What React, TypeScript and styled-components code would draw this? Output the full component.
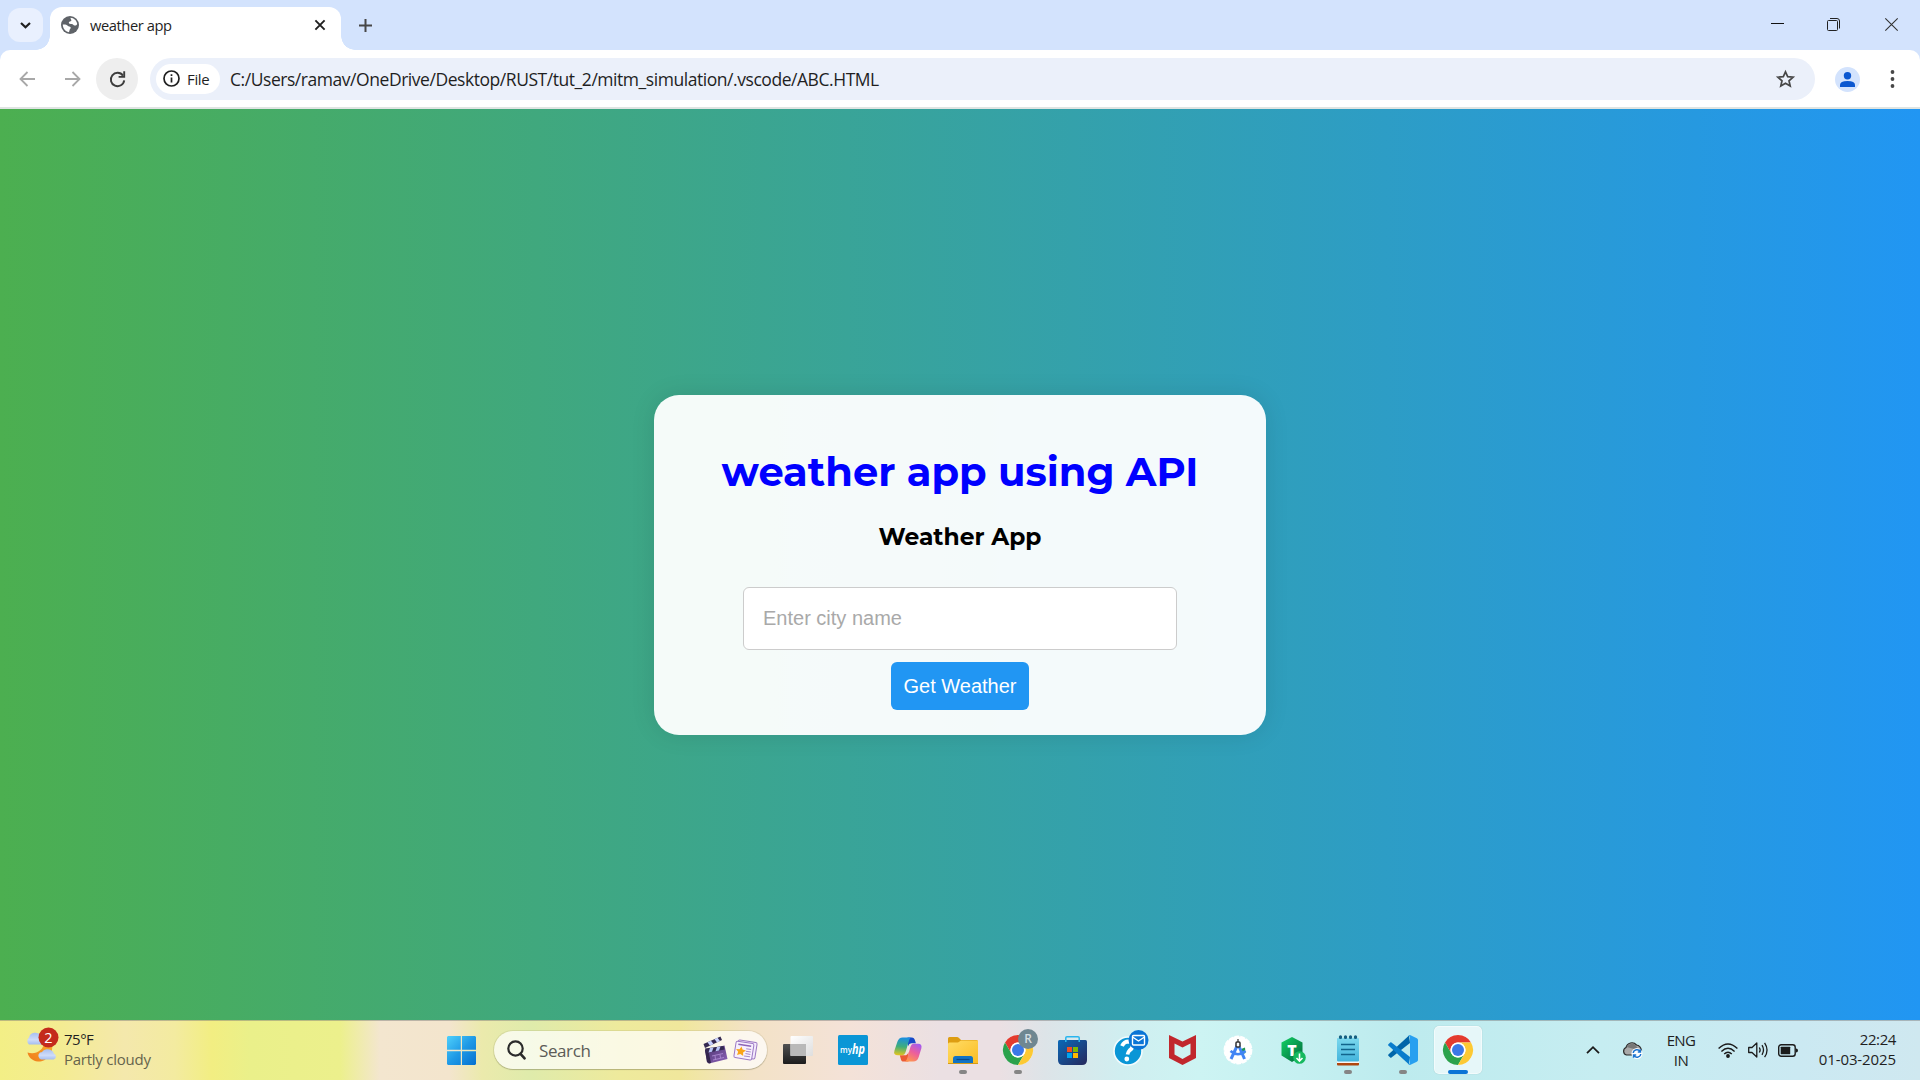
import React from "react";
import styled, { createGlobalStyle } from "styled-components";

const ui = `"Segoe UI", "Open Sans", "Noto Sans", sans-serif`;

const GlobalStyle = createGlobalStyle`
  *, *::before, *::after { box-sizing: border-box; }
  html, body { margin: 0; padding: 0; overflow: hidden; }
  body { font-family: ${ui}; color: #1f1f1f; }
  svg { display: block; flex: none; overflow: visible; }
`;

const Screen = styled.div`
  display: flex;
  flex-direction: column;
  width: 1920px;
  height: 1080px;
  overflow: hidden;
`;

/* ---------- browser chrome ---------- */

const TabStrip = styled.header`
  display: flex;
  align-items: flex-start;
  height: 50px;
  padding: 0 22px 0 8px;
  background: #d3e3fd;
`;

const TabSearch = styled.button`
  display: grid;
  place-items: center;
  width: 35px;
  height: 34px;
  margin: 8px 7px 0 0;
  padding: 0;
  border: 0;
  border-radius: 12px;
  background: #e9f0fe;
`;

const Tab = styled.div`
  position: relative;
  display: flex;
  align-items: center;
  width: 291px;
  height: 43px;
  margin-top: 7px;
  padding: 0 16px 7px 11px;
  border-radius: 12px 12px 0 0;
  background: #fff;

  &::before,
  &::after {
    content: "";
    position: absolute;
    bottom: 0;
    width: 14px;
    height: 14px;
  }
  &::before {
    right: 100%;
    background: radial-gradient(circle at 0 0, transparent 13.5px, #fff 14px);
  }
  &::after {
    left: 100%;
    background: radial-gradient(circle at 100% 0, transparent 13.5px, #fff 14px);
  }
`;

const TabTitle = styled.span`
  flex: 1;
  padding-left: 11px;
  font-size: 14.7px;
  line-height: 20px;
  letter-spacing: -0.42px;
`;

const NewTab = styled.button`
  margin: 19px 0 0 18px;
  padding: 0;
  border: 0;
  background: none;
`;

const WindowControls = styled.div`
  display: grid;
  grid-template-columns: 56px 58px 13px;
  margin: 18px 0 0 auto;
`;

const ToolbarBack = styled.div`
  background: #d3e3fd;
`;

const Toolbar = styled.div`
  display: flex;
  align-items: center;
  height: 59px;
  padding: 0 20px 1px 19px;
  border-radius: 10px 10px 0 0;
  background: linear-gradient(#fff 57px, #dfe4e2 57px);
`;

const NavIcon = styled.span<{ $gap: number }>`
  margin-right: ${(p) => p.$gap}px;
`;

const Reload = styled.button`
  display: grid;
  place-items: center;
  width: 42px;
  height: 42px;
  margin-right: 12px;
  padding: 0;
  border: 0;
  border-radius: 50%;
  background: #eeeeee;
`;

const Omnibox = styled.div`
  display: flex;
  align-items: center;
  width: 1665px;
  height: 42px;
  padding: 0 20px 0 6px;
  border-radius: 21px;
  background: #ebf0fa;
`;

const FileChip = styled.div`
  display: flex;
  align-items: center;
  gap: 7px;
  width: 64px;
  height: 30px;
  padding: 0 0 1px 7px;
  border-radius: 15px;
  background: #fff;
  font-size: 15px;
  font-weight: 500;
  line-height: 20px;
  letter-spacing: -0.35px;
`;

const Url = styled.span`
  flex: 1;
  padding: 0 0 0 10px;
  font-size: 17.5px;
  line-height: 24px;
  letter-spacing: -0.45px;
  white-space: nowrap;
`;

const Profile = styled.div`
  display: grid;
  place-items: center;
  width: 25px;
  height: 25px;
  margin: 0 30px 0 20px;
  border-radius: 50%;
  background: #d3e3fd;
`;

/* ---------- web page ---------- */

const Page = styled.main`
  display: flex;
  align-items: center;
  justify-content: center;
  height: 911px;
  padding-top: 1px;
  background: linear-gradient(to right, #4caf50, #2196f3);
`;

const Card = styled.section`
  display: flex;
  flex-direction: column;
  align-items: center;
  width: 612px;
  height: 340px;
  border-radius: 25px;
  background: rgba(255, 255, 255, 0.95);
  box-shadow: 0 0 25px rgba(0, 0, 0, 0.1);
`;

const Title = styled.h1`
  margin: 52px 0 0;
  color: #0000ff;
  font: 700 40px/50px Montserrat, Inter, sans-serif;
  white-space: nowrap;
`;

const Subtitle = styled.h3`
  margin: 25px 0 0;
  color: #000;
  font: 700 23.4px/30px Montserrat, Inter, sans-serif;
  white-space: nowrap;
`;

const CityInput = styled.input`
  width: 434px;
  height: 63px;
  margin: 35px 0 12px;
  padding: 0 19px;
  border: 1px solid #ccc;
  border-radius: 6px;
  outline: 0;
  background: #fff;
  font: 20px "Liberation Sans", Arial, sans-serif;
  &::placeholder {
    color: #a9a9a9;
    opacity: 1;
  }
`;

const GetButton = styled.button`
  width: 138px;
  height: 48px;
  padding: 0;
  border: 0;
  border-radius: 6px;
  background: #2196f3;
  color: #fff;
  font: 20px "Liberation Sans", Arial, sans-serif;
`;

/* ---------- taskbar ---------- */

const Taskbar = styled.footer`
  display: flex;
  align-items: center;
  height: 60px;
  box-shadow: inset 0 1px rgba(120, 120, 120, 0.45);
  background: linear-gradient(
    to right,
    #f3ef86 0,
    #f4ec92 60px,
    #f4e8ac 125px,
    #f3eba0 175px,
    #f2ee82 212px,
    #eaf08a 250px,
    #ecf08c 340px,
    #f3e6cf 380px,
    #f3e5cd 450px,
    #ebeaac 482px,
    #dfebab 530px,
    #eeea9c 620px,
    #f0e79c 680px,
    #f3e2c6 750px,
    #f4e2d8 850px,
    #ebe0e3 940px,
    #ebe0e3 1000px,
    #dde4e8 1045px,
    #d0eef0 1120px,
    #cdf4f3 1200px,
    #c5f0f1 1300px,
    #bdebee 1400px,
    #c6edf1 1600px,
    #cbe9f2 1800px,
    #cfe8f0 1920px
  );
`;

const Weather = styled.div`
  display: flex;
  align-items: flex-start;
  gap: 5px;
  width: 434px;
  height: 60px;
  padding: 7px 0 0 24px;
`;

const WeatherText = styled.div`
  padding-top: 2px;
  font-size: 15px;
  line-height: 20px;
  letter-spacing: -0.5px;
`;

const Condition = styled.div`
  color: #66644c;
  letter-spacing: -0.25px;
`;

const AppCell = styled.div`
  position: relative;
  display: grid;
  place-items: center;
  width: 55px;
  height: 60px;
`;

const ActiveTile = styled.div`
  display: grid;
  place-items: center;
  width: 48px;
  height: 48px;
  border: 1px solid rgba(255, 255, 255, 0.5);
  border-radius: 5px;
  background: rgba(255, 255, 255, 0.6);
  box-shadow: 0 0 1px rgba(0, 0, 0, 0.25);
`;

const Running = styled.span<{ $active?: boolean }>`
  position: absolute;
  left: 50%;
  bottom: 6px;
  width: ${(p) => (p.$active ? 20 : 8)}px;
  height: 4px;
  border-radius: 2px;
  background: ${(p) => (p.$active ? "#0a74d6" : "#858585")};
  transform: translateX(-50%);
`;

const SearchBox = styled.div`
  display: flex;
  align-items: center;
  width: 273px;
  height: 38px;
  margin: 0 3px 0 5px;
  padding: 0 10px 0 13px;
  border-radius: 19px;
  background: rgba(255, 255, 255, 0.72);
  box-shadow: 0 0 0 1px rgba(120, 120, 80, 0.14), 0 1px 1px rgba(90, 90, 60, 0.3);
`;

const SearchLabel = styled.span`
  flex: 1;
  padding: 1px 0 0 13px;
  color: #5c5c57;
  font-size: 17px;
  line-height: 24px;
  letter-spacing: -0.4px;
`;

const SearchArt = styled.span`
  display: flex;
  align-items: center;
  gap: 6px;
`;

const Tray = styled.div`
  display: flex;
  align-items: center;
  flex: 1;
  height: 60px;
  padding: 0 24px 0 101px;
  font-size: 15px;
  line-height: 20px;
`;

const Language = styled.div`
  width: 60px;
  margin: 0 7px 0 7px;
  text-align: center;
  letter-spacing: -0.6px;
`;

const Status = styled.div`
  display: flex;
  align-items: center;
  gap: 10px;
`;

const Clock = styled.div`
  flex: 1;
  margin-top: -2px;
  text-align: right;
  white-space: nowrap;
  letter-spacing: -0.1px;
`;

const Time = styled.div`
  letter-spacing: -0.4px;
`;

/* ---------- drawings ---------- */

const ChromeLogo = () => (
  <svg width="30" height="30" viewBox="0 0 48 48">
    <circle cx="24" cy="24" r="24" fill="#fff" />
    <path d="M3.2 12A24 24 0 0 1 44.8 12H24A12 12 0 0 0 13.6 30Z" fill="#e33b2e" />
    <path d="M3.2 12A24 24 0 0 0 24 48L34.4 30A12 12 0 0 1 13.6 30Z" fill="#2ba24c" />
    <path d="M44.8 12A24 24 0 0 1 24 48L34.4 30A12 12 0 0 0 24 12Z" fill="#fcc934" />
    <circle cx="24" cy="24" r="12" fill="#fff" />
    <circle cx="24" cy="24" r="9.6" fill="#3b78e7" />
  </svg>
);

const Globe = () => (
  <svg width="18" height="18" viewBox="0 0 18 18">
    <circle cx="9" cy="9" r="9" fill="#5f6368" />
    <path d="M9.500 1.700C13 1.900 15.800 4.600 16.200 8C15.500 9.600 14 10 12.800 9.200C12 8.500 11.500 8 9.800 8C8.200 8 7.600 7.300 7.900 6.300C8.300 5.200 9.600 5.600 10.300 4.800C10.900 4 9.400 3.200 9.500 1.700Z" fill="#fff" />
    <path d="M1.800 8.500C3.500 8.200 5.800 8.600 6.700 9.700C7.400 10.700 9 10.200 9.600 11.200C10.200 12.300 9 12.900 8.600 13.800C8.400 14.600 8.600 15.500 7.800 16.200C4.300 15.500 1.800 12.500 1.800 8.500Z" fill="#fff" />
  </svg>
);

const WeatherIcon = () => (
  <svg width="35" height="36" viewBox="0 0 35 36">
    <defs>
      <linearGradient id="cl" x1="0" y1="0" x2="0" y2="1">
        <stop offset="0" stopColor="#a8bff0" />
        <stop offset=".6" stopColor="#cfdcf8" />
        <stop offset="1" stopColor="#a4bdf0" />
      </linearGradient>
      <linearGradient id="mn" x1="0" y1="1" x2="1" y2="0">
        <stop offset="0" stopColor="#ef7a1c" />
        <stop offset="1" stopColor="#fbb02c" />
      </linearGradient>
    </defs>
    <path d="M28 16C30 27 22 35 14 34.500C8 34 4.500 30 3.500 25.500C11 27.500 19 25 21 14Z" fill="url(#mn)" />
    <path d="M5 17.500a4.500 4.500 0 0 1 0-7a6.500 5.800 0 0 1 12-2q4 1 4 5t-4 4z" fill="url(#cl)" />
    <path d="M17 32.500a4 4 0 0 1-1-7q2-.5 2-.5a6 5 0 0 1 9.500-1.500q2 1 2.300 3a3.300 3.200 0 0 1 0 6z" fill="url(#cl)" />
    <circle cx="24.500" cy="10.500" r="10" fill="#c42b1c" />
    <text x="24.500" y="15.800" textAnchor="middle" fontFamily="Open Sans, sans-serif" fontSize="14.500" fill="#fff">2</text>
  </svg>
);

const WindowsLogo = () => (
  <svg width="29" height="29" viewBox="0 0 29 29">
    <defs>
      <linearGradient id="wn" gradientUnits="userSpaceOnUse" x1="0" y1="0" x2="29" y2="29">
        <stop offset="0" stopColor="#4fd0fb" />
        <stop offset=".5" stopColor="#1f9ae6" />
        <stop offset="1" stopColor="#0470d0" />
      </linearGradient>
    </defs>
    <path d="M1 0H13.800V13.800H0V1ZM15 0H28L29 1V13.800H15ZM0 15.200H13.800V29H1L0 28ZM15 15.200H29V28L28 29H15Z" fill="url(#wn)" />
  </svg>
);

const SearchGlyph = () => (
  <svg width="19" height="20" viewBox="0 0 19 20" fill="none" stroke="#2b2b2b" strokeWidth="2.200">
    <circle cx="8.500" cy="8.500" r="7.200" />
    <path d="M13.500 13.800L17.600 18.300" strokeWidth="2.600" strokeLinecap="round" />
  </svg>
);

const Clapper = () => (
  <svg width="25" height="28" viewBox="0 0 25 28">
    <defs>
      <linearGradient id="cp" x1="0" y1="0" x2="1" y2="1">
        <stop offset="0" stopColor="#49346d" />
        <stop offset="1" stopColor="#8f62ba" />
      </linearGradient>
    </defs>
    <path d="M2 14L21.500 9.500L24.500 23L6 27.500L4 26Z" fill="url(#cp)" />
    <path d="M2 14L5 13.200L8 27L6 27.500L4 26Z" fill="#33254d" />
    <path d="M.5 8L17.500 .5L19 4L2 12Z" fill="#352a52" />
    <path d="M4.500 6.300L8 4.700L10.500 8L7 9.700ZM11.500 3.100L14.500 1.800L17 5L14 6.400Z" fill="#c9d3ff" />
    <path d="M2 12.500L20.500 10L21.500 13.500L3 17Z" fill="#352a52" />
    <path d="M7 12L10.500 11.400L9 15.800L5.500 16.500ZM14 11L17.500 10.500L16 14.500L12.500 15.200Z" fill="#b8c5f8" />
    <path d="M9 20L20 17.500M10 24L21 21.500M12 19.500L12.500 23.500M17 18.500L17.500 22" stroke="#b391d8" strokeWidth=".8" fill="none" />
  </svg>
);

const News = () => (
  <svg width="23" height="21" viewBox="0 0 23 21">
    <g transform="rotate(9 11 10)">
      <rect x="3" y="1" width="19" height="16.500" rx="1.500" fill="#f4eafc" stroke="#9c79c4" strokeWidth="1" />
      <rect x="1" y="2.500" width="18" height="16.500" rx="1.500" fill="#f7f0fd" stroke="#9c79c4" strokeWidth="1" />
      <path d="M3.500 5.300H16.500" stroke="#8d64b8" strokeWidth="1.500" />
      <path d="M12 8.500H17M12 11H17M12 13.500H17M11 16H17" stroke="#a98bca" strokeWidth="1" />
      <path d="M7 7L8.500 10L12 10.400L9.500 12.800L10.200 16.200L7 14.600L3.900 16.200L4.500 12.800L2 10.400L5.500 10Z" fill="#f9a51a" />
    </g>
  </svg>
);

const TaskView = () => (
  <svg width="30" height="28" viewBox="0 0 30 28">
    <defs>
      <linearGradient id="tv" x1="0" y1="0" x2="0" y2="1">
        <stop offset="0" stopColor="#515151" />
        <stop offset="1" stopColor="#1c1c1c" />
      </linearGradient>
      <linearGradient id="tw" x1="0" y1="0" x2="1" y2="1">
        <stop offset="0" stopColor="#fff" />
        <stop offset="1" stopColor="#dedede" />
      </linearGradient>
    </defs>
    <rect x="0" y="8" width="23" height="20" rx="1" fill="url(#tv)" />
    <rect x="7.500" y="0" width="22.500" height="20" rx="1" fill="url(#tw)" />
    <path d="M7.500 8H23V20H7.500Z" fill="#b9b9b9" />
  </svg>
);

const MyHp = () => (
  <svg width="30" height="30" viewBox="0 0 30 30">
    <rect width="30" height="30" rx="1.500" fill="#0a96d6" />
    <text x="2" y="18" fontFamily="Open Sans, sans-serif" fontSize="9.500" fontWeight="600" fill="#fff" textLength="12" lengthAdjust="spacingAndGlyphs">my</text>
    <text x="14" y="19" fontFamily="Open Sans, sans-serif" fontSize="14" fontStyle="italic" fontWeight="700" fill="#fff" textLength="13" lengthAdjust="spacingAndGlyphs">hp</text>
  </svg>
);

const Copilot = () => (
  <svg width="28" height="26" viewBox="0 0 29 26">
    <defs>
      <linearGradient id="c1" x1=".3" y1="0" x2=".2" y2="1">
        <stop offset="0" stopColor="#1b8fe0" />
        <stop offset=".5" stopColor="#3fae7a" />
        <stop offset="1" stopColor="#e8c51c" />
      </linearGradient>
      <linearGradient id="c2" x1=".8" y1="0" x2=".3" y2="1">
        <stop offset="0" stopColor="#a35bf0" />
        <stop offset=".5" stopColor="#ec5f9c" />
        <stop offset="1" stopColor="#ff9550" />
      </linearGradient>
    </defs>
    <path d="M14 0H18.500Q21 0 21.700 3L22.700 6H18Q15.500 6 14.500 9Z" fill="#1748c8" />
    <path d="M15 25H10Q7.500 25 7 22L6 18.500H11Q14 18.500 15 15Z" fill="#ec5b34" />
    <path d="M17.500 0H9Q5 0 3.500 4.500L.5 13.500Q-1 18.500 4 18.500H8Q11 18.500 12.200 14.500L15 5Q16 .8 17.500 0Z" fill="url(#c1)" />
    <path d="M11.500 25H20Q24 25 25.500 20.500L28.300 11.500Q29.500 6.500 25 6.500H20.500Q18 6.500 17 10L14 20.500Q13.200 24 11.500 25Z" fill="url(#c2)" />
  </svg>
);

const Folder = () => (
  <svg width="30" height="27" viewBox="0 0 30 27">
    <defs>
      <linearGradient id="fo" x1="0" y1="0" x2="1" y2="1">
        <stop offset="0" stopColor="#ffdc66" />
        <stop offset="1" stopColor="#fbbd23" />
      </linearGradient>
    </defs>
    <path d="M0 1.500Q0 0 1.500 0H9Q10 0 11 1L13 3H28.500Q30 3 30 4.500V9H0Z" fill="#dd9d12" />
    <path d="M0 7Q0 5.500 1.500 5.500H10L13 3.500H29Q30 3.500 30 4.500V26H0Z" fill="url(#fo)" />
    <path d="M5 26V21.500Q5 19 7.500 19H22.500Q25 19 25 21.500V26Z" fill="#1273c4" />
    <path d="M8.500 22.500H21.500" stroke="#084b8c" strokeWidth="1.200" />
    <path d="M0 26.500H30" stroke="#d69b16" />
  </svg>
);

const Store = () => (
  <svg width="29" height="29" viewBox="0 0 29 29">
    <defs>
      <linearGradient id="st" x1="0" y1="0" x2="1" y2="1">
        <stop offset="0" stopColor="#0a69b8" />
        <stop offset="1" stopColor="#27285c" />
      </linearGradient>
    </defs>
    <path d="M0 5.500Q0 4 1.500 4H27.500Q29 4 29 5.500V24Q29 29 24 29H5Q0 29 0 24Z" fill="url(#st)" />
    <path d="M7.800 6V1.800Q7.800 .7 9 .7H20Q21.200 .7 21.200 1.800V6" fill="none" stroke="#29b5ee" strokeWidth="1.500" />
    <rect x="9" y="11" width="5" height="5" fill="#f25022" />
    <rect x="15" y="11" width="5" height="5" fill="#7fba00" />
    <rect x="9" y="17" width="5" height="5" fill="#00a4ef" />
    <rect x="15" y="17" width="5" height="5" fill="#ffb900" />
  </svg>
);

const HpHelp = () => (
  <svg width="36" height="36" viewBox="0 0 36 36">
    <circle cx="15" cy="21" r="14" fill="#0a96d6" stroke="#f3fbfd" strokeWidth="1.600" />
    <path d="M9 16Q11 11.500 15.500 11.500Q20.500 12 19.500 16.500Q19 19 16.500 20.500Q15 22 14.500 24.500" fill="none" stroke="#fff" strokeWidth="3.800" />
    <circle cx="13.800" cy="29" r="2.400" fill="#fff" />
    <circle cx="25.500" cy="10" r="10" fill="#0a74d6" />
    <rect x="19.500" y="5.500" width="12" height="9.500" rx="1" fill="none" stroke="#fff" strokeWidth="1.400" />
    <path d="M19.500 7L25.500 11L31.500 7" fill="none" stroke="#fff" strokeWidth="1.400" />
  </svg>
);

const McAfee = () => (
  <svg width="27" height="30" viewBox="0 0 27 30">
    <path d="M0 0L13.500 6.500L27 0V23L13.500 30L0 23ZM5.500 8.500V19.500L13.500 24L21.500 19.500V8.500L13.500 12.500Z" fill="#c1272d" fillRule="evenodd" />
  </svg>
);

const Studio = () => (
  <svg width="30" height="30" viewBox="0 0 30 30">
    <circle cx="15" cy="15" r="13.600" fill="#fff" stroke="#fff" strokeWidth="1.600" strokeDasharray="5 1" />
    <path d="M18 14L22 12.500L22.500 18L18 20Z" fill="#219653" />
    <path d="M15 9L8 24" stroke="#4285f4" strokeWidth="3" />
    <path d="M15 9L21.500 24" stroke="#4285f4" strokeWidth="3" />
    <path d="M7.500 16Q15 22.500 22.500 16" fill="none" stroke="#4285f4" strokeWidth="2.600" />
    <rect x="13" y="7" width="4" height="5" rx="1" fill="#fff" stroke="#333" strokeWidth="1.500" />
    <path d="M15 4V7" stroke="#333" strokeWidth="1.200" />
  </svg>
);

const HexT = () => (
  <svg width="24" height="27" viewBox="0 0 24 27">
    <defs>
      <linearGradient id="hx" x1="0" y1="0" x2="1" y2="1">
        <stop offset="0" stopColor="#12d264" />
        <stop offset="1" stopColor="#04663c" />
      </linearGradient>
    </defs>
    <path d="M11 0L21.500 5.500V18.500L11 25L.5 18.500V5.500Z" fill="url(#hx)" />
    <text x="11" y="18.500" textAnchor="middle" fontFamily="Open Sans, sans-serif" fontSize="16" fontWeight="800" fill="#fff">T</text>
    <circle cx="18.500" cy="20.500" r="6.300" fill="#16b95f" />
    <path d="M18.500 16.500V23.500M15.500 21L18.500 24L21.500 21" fill="none" stroke="#fff" strokeWidth="1.600" />
  </svg>
);

const Notepad = () => (
  <svg width="22" height="31" viewBox="0 0 22 31">
    <defs>
      <linearGradient id="np" x1="0" y1="0" x2="0" y2="1">
        <stop offset="0" stopColor="#7cd8ee" />
        <stop offset="1" stopColor="#42b4dc" />
      </linearGradient>
    </defs>
    <rect y="25" width="22" height="5.500" rx="1" fill="#b0470f" />
    <rect y="25" width="22" height="3" fill="#f5f5f5" />
    <rect y="3" width="22" height="23.500" rx="1" fill="url(#np)" />
    <path d="M4 9.500H18M4 14.500H18M4 19.500H18" stroke="#12648c" strokeWidth="1.700" />
    <path d="M3.500 1.800V2.500M8.500 1.800V2.500M13.500 1.800V2.500M18.500 1.800V2.500" stroke="#155f80" strokeWidth="3.200" strokeLinecap="round" />
  </svg>
);

const VsCode = () => (
  <svg width="30" height="30" viewBox="0 0 30 30">
    <path d="M22 8L3.500 22.500Q2.800 23 2.200 22.500L.4 20.800Q-.2 20.200 .4 19.500L21 .5Z" fill="#0065a9" />
    <path d="M22 22L3.500 7.500Q2.800 7 2.200 7.500L.4 9.200Q-.2 9.800 .4 10.500L21 29.500Z" fill="#0a7ccc" />
    <path d="M22 0L28.800 3.200Q30 3.800 30 5V25Q30 26.200 28.800 26.800L22 30Q21 30 20.500 29Q22 29 22 27.500V2.500Q22 1 20.500 1Q21 0 22 0Z" fill="#28a0f0" />
  </svg>
);

const AccountBadge = styled.span`
  position: absolute;
  top: 9px;
  right: 7px;
  display: grid;
  place-items: center;
  width: 20px;
  height: 20px;
  border-radius: 50%;
  background: #6f8791;
  color: #d5dfe2;
  font-size: 12px;
  font-weight: 600;
  line-height: 20px;
`;

const HelpSlot = styled.span`
  padding: 0 0 5px 7px;
`;

const NudgeSlot = styled.span`
  padding-left: 1px;
`;

type TaskApp = { name: string; icon: React.ReactNode; running?: boolean };

const apps: TaskApp[] = [
  { name: "task-view", icon: <TaskView /> },
  { name: "myhp", icon: <MyHp /> },
  { name: "copilot", icon: <NudgeSlot><Copilot /></NudgeSlot> },
  { name: "explorer", icon: <Folder />, running: true },
  { name: "chrome-r", icon: <><ChromeLogo /><AccountBadge>R</AccountBadge></>, running: true },
  { name: "store", icon: <Store /> },
  { name: "help", icon: <HelpSlot><HpHelp /></HelpSlot> },
  { name: "mcafee", icon: <McAfee /> },
  { name: "studio", icon: <Studio /> },
  { name: "hex", icon: <HexT /> },
  { name: "notepad", icon: <Notepad />, running: true },
  { name: "vscode", icon: <VsCode />, running: true },
];

const CloudSlot = styled.span`
  margin-left: 22px;
`;

const Cloud = () => (
  <CloudSlot>
    <svg width="22" height="18" viewBox="0 0 22 18">
      <path d="M4.500 14A4 4 0 0 1 4 6.500A6 6 0 0 1 14.500 4Q18.500 4.500 19.500 9.500Q19.500 14 16 14Z" fill="#a9a9a9" stroke="#2a2a2a" strokeWidth="1.200" />
      <path d="M4.500 6Q8 1 13 3.500L17 9L12 8Z" fill="#777" />
      <circle cx="15" cy="12.500" r="5.500" fill="#fff" />
      <path d="M11.200 12A3.900 3.900 0 0 1 18.500 10.800M18.500 8.300V11H15.800M18.800 13A3.900 3.900 0 0 1 11.500 14.200M11.500 16.700V14H14.200" fill="none" stroke="#1b74d0" strokeWidth="1.400" />
    </svg>
  </CloudSlot>
);

export default function App() {
  return (
    <Screen>
      <GlobalStyle />
      <TabStrip>
        <TabSearch aria-label="tabs">
          <svg width="11" height="7" viewBox="0 0 11 7" fill="none" stroke="#1f1f1f" strokeWidth="2.200">
            <path d="M1 1L5.500 5.300L10 1" />
          </svg>
        </TabSearch>
        <Tab>
          <Globe />
          <TabTitle>weather app</TabTitle>
          <svg width="10" height="10" viewBox="0 0 10 10" stroke="#1f1f1f" strokeWidth="1.900">
            <path d="M.4 .4L9.600 9.600M9.600 .4L.4 9.600" />
          </svg>
        </Tab>
        <NewTab aria-label="new">
          <svg width="13" height="13" viewBox="0 0 13 13" stroke="#474747" strokeWidth="2">
            <path d="M6.500 0V13M0 6.500H13" />
          </svg>
        </NewTab>
        <WindowControls>
          <svg width="13" height="13" viewBox="0 0 13 13" stroke="#111">
            <path d="M0 5.500H13" />
          </svg>
          <svg width="13" height="13" viewBox="0 0 13 13" fill="none" stroke="#222">
            <rect x=".5" y="2.500" width="10" height="10" rx="1" />
            <path d="M3 .5H10Q12.500 .5 12.500 3V10.500" />
          </svg>
          <svg width="13" height="13" viewBox="0 0 13 13" stroke="#333" strokeWidth="1.100">
            <path d="M.3 .3L12.700 12.700M12.700 .3L.3 12.700" />
          </svg>
        </WindowControls>
      </TabStrip>

      <ToolbarBack>
        <Toolbar>
          <NavIcon $gap={30}>
            <svg width="16" height="16" viewBox="0 0 16 16" fill="none" stroke="#a8a8a8" strokeWidth="1.800">
              <path d="M16 8H2M8.500 1L1.500 8L8.500 15" />
            </svg>
          </NavIcon>
          <NavIcon $gap={15}>
            <svg width="16" height="16" viewBox="0 0 16 16" fill="none" stroke="#a8a8a8" strokeWidth="1.800">
              <path d="M0 8H14M7.500 1L14.500 8L7.500 15" />
            </svg>
          </NavIcon>
          <Reload aria-label="reload">
            <svg width="16" height="16" viewBox="0 0 16 16" fill="none" stroke="#3c3c3c" strokeWidth="1.900">
              <path d="M14 4.600A6.700 6.700 0 1 0 15.200 9.300" />
              <path d="M15.200 .3V5.900H9.600" />
            </svg>
          </Reload>
          <Omnibox>
            <FileChip>
              <svg width="17" height="17" viewBox="0 0 17 17" fill="none" stroke="#1f1f1f" strokeWidth="1.700">
                <circle cx="8.500" cy="8.500" r="7.500" />
                <path d="M8.500 7.500V12.500M8.500 4.300V6" />
              </svg>
              File
            </FileChip>
            <Url>C:/Users/ramav/OneDrive/Desktop/RUST/tut_2/mitm_simulation/.vscode/ABC.HTML</Url>
            <svg width="19" height="18" viewBox="0 0 19 18" fill="none" stroke="#474747" strokeWidth="1.700">
              <path d="M9.500 1.800L11.700 6.700L17.100 7.200L13 10.800L14.200 16L9.500 13.200L4.800 16L6 10.800L1.900 7.200L7.300 6.700Z" />
            </svg>
          </Omnibox>
          <Profile>
            <svg width="15" height="15" viewBox="0 0 15 15" fill="#0b57d0">
              <circle cx="7.500" cy="3.700" r="3.700" />
              <path d="M0 15V13Q0 9 7.500 9T15 13V15Z" />
            </svg>
          </Profile>
          <svg width="5" height="18" viewBox="0 0 5 18" fill="#474747">
            <circle cx="2.500" cy="2" r="1.900" />
            <circle cx="2.500" cy="9" r="1.900" />
            <circle cx="2.500" cy="16" r="1.900" />
          </svg>
        </Toolbar>
      </ToolbarBack>

      <Page>
        <Card>
          <Title>weather app using API</Title>
          <Subtitle>Weather App</Subtitle>
          <CityInput placeholder="Enter city name" />
          <GetButton>Get Weather</GetButton>
        </Card>
      </Page>

      <Taskbar>
        <Weather>
          <WeatherIcon />
          <WeatherText>
            <div>75°F</div>
            <Condition>Partly cloudy</Condition>
          </WeatherText>
        </Weather>
        <AppCell>
          <WindowsLogo />
        </AppCell>
        <SearchBox>
          <SearchGlyph />
          <SearchLabel>Search</SearchLabel>
          <SearchArt>
            <Clapper />
            <News />
          </SearchArt>
        </SearchBox>
        {apps.map((a) => (
          <AppCell key={a.name}>
            {a.icon}
            {a.running && <Running />}
          </AppCell>
        ))}
        <AppCell>
          <ActiveTile>
            <ChromeLogo />
          </ActiveTile>
          <Running $active />
        </AppCell>
        <Tray>
          <svg width="14" height="8" viewBox="0 0 14 8" fill="none" stroke="#1b1b1b" strokeWidth="1.800">
            <path d="M1 7.200L7 1.200L13 7.200" />
          </svg>
          <Cloud />
          <Language>
            ENG
            <br />
            IN
          </Language>
          <Status>
            <svg width="20" height="15" viewBox="0 0 20 15" fill="none" stroke="#1b1b1b" strokeWidth="1.400">
              <path d="M.6 5.500Q10 -3.500 19.400 5.500M3.400 8.500Q10 2 16.600 8.500M6.200 11Q10 7.500 13.800 11" />
              <circle cx="10" cy="13" r="1.200" fill="#1b1b1b" />
            </svg>
            <svg width="20" height="16" viewBox="0 0 20 16" fill="none" stroke="#1b1b1b" strokeWidth="1.300">
              <path d="M.7 5.500H4L8.800 1V15L4 10.500H.7Z" strokeLinejoin="round" />
              <path d="M11.300 5.500Q13 8 11.300 10.500M14 3.200Q17 8 14 12.800M16.600 .8Q21.500 8 16.600 15.200" />
            </svg>
            <svg width="20" height="13" viewBox="0 0 20 13">
              <rect x=".7" y=".7" width="16.500" height="11.600" rx="2.500" fill="none" stroke="#1b1b1b" strokeWidth="1.400" />
              <rect x="2.700" y="2.700" width="9.500" height="7.600" rx=".6" fill="#1b1b1b" />
              <path d="M18 4.500Q20 4.500 20 6.500T18 8.500Z" fill="#1b1b1b" />
            </svg>
          </Status>
          <Clock>
            <Time>22:24</Time>
            01-03-2025
          </Clock>
        </Tray>
      </Taskbar>
    </Screen>
  );
}
